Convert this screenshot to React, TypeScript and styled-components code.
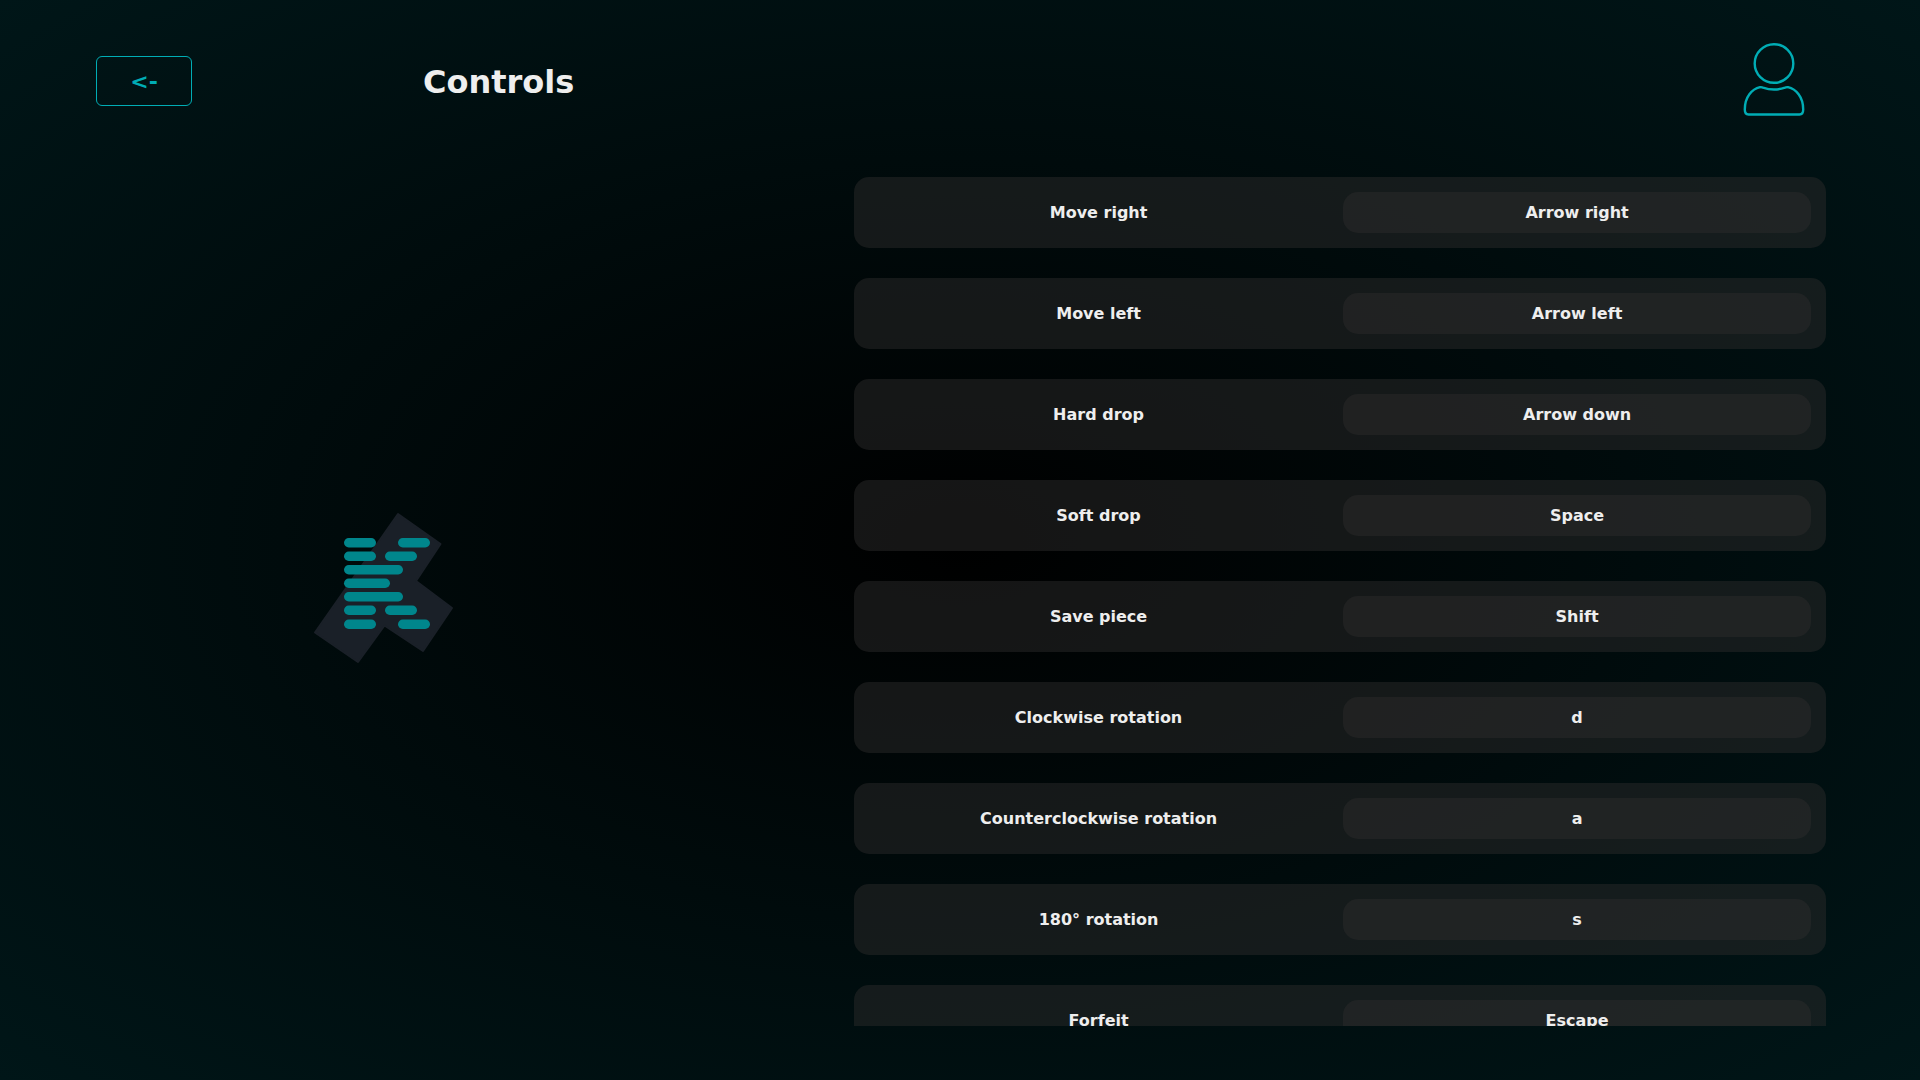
import React from "react";
import styled, { createGlobalStyle } from "styled-components";

const GlobalStyle = createGlobalStyle`
  *, *::before, *::after { box-sizing: border-box; }
  body {
    margin: 0;
    color: #eeeeee;
    background: #000;
    font-family: "DejaVu Sans", Verdana, sans-serif;
    font-size: 16px;
    font-weight: 700;
    line-height: 19px;
  }
`;

const Page = styled.div`
  display: flex;
  flex-direction: column;
  height: 100vh;
  padding: 0 94px 5vh 96px;
  overflow: hidden;
  background: radial-gradient(ellipse at center, #000000 0%, #001618 100%);
`;

const Header = styled.header`
  display: flex;
  flex: none;
  align-items: center;
  height: 15vh;
`;

const BackButton = styled.button`
  width: 96px;
  height: 50px;
  padding: 0;
  border: 1px solid #00adb5;
  border-radius: 6px;
  background: transparent;
  color: #00adb5;
  font: inherit;
  font-size: 22px;
  cursor: pointer;
`;

const Title = styled.h1`
  flex: 1;
  margin: 0;
  padding: 2px 0 0 231px;
  font-size: 32px;
  line-height: 40px;
`;

const ProfileButton = styled.button`
  display: flex;
  margin-right: 21px;
  padding: 0;
  border: 0;
  background: none;
  color: #00adb5;
  cursor: pointer;
`;

const Main = styled.main`
  display: grid;
  flex: 1;
  grid-template-columns: 574fr 184fr 972fr;
  min-height: 0;
`;

const LogoPane = styled.div`
  display: grid;
  place-items: center;
  padding-bottom: 12px;
`;

const ControlList = styled.dl`
  display: flex;
  grid-column: 3;
  flex-direction: column;
  gap: 30px;
  min-height: 0;
  margin: 0;
  padding-top: 15px;
  overflow-y: auto;
  scrollbar-width: none;
`;

const ControlRow = styled.div`
  display: grid;
  flex: none;
  grid-template-columns: 23fr 22fr;
  align-items: center;
  padding: 15px 15px 15px 0;
  border-radius: 15px;
  background: rgba(42, 42, 42, 0.5);
  text-align: center;
`;

const Action = styled.dt`
  margin: 0;
`;

const KeyName = styled.dd`
  margin: 0;
  padding: 11px;
  border-radius: 15px;
  background: rgba(54, 51, 51, 0.33);
`;

const controls = [
  ["Move right", "Arrow right"],
  ["Move left", "Arrow left"],
  ["Hard drop", "Arrow down"],
  ["Soft drop", "Space"],
  ["Save piece", "Shift"],
  ["Clockwise rotation", "d"],
  ["Counterclockwise rotation", "a"],
  ["180° rotation", "s"],
  ["Forfeit", "Escape"],
];

// Each bar of the K: x, y, width
const bars = [
  [44, 38, 32], [98, 38, 32],
  [44, 51.5, 32], [85, 51.5, 32],
  [44, 65, 59],
  [44, 78.5, 46],
  [44, 92, 59],
  [44, 105.5, 32], [85, 105.5, 32],
  [44, 119.5, 32], [98, 119.5, 32],
];

function Logo() {
  return (
    <svg width="142" height="152" viewBox="12 12 142 152" role="img" aria-label="Logo">
      <path
        d="M98 14L140.500 44L116 81L152 108L123 151L84.500 125.500L58 162L15 132.500Z"
        fill="#1a2028"
        stroke="#1a2028"
        strokeLinejoin="round"
        strokeWidth="2"
      />
      {bars.map(([x, y, width]) => (
        <rect key={`${x}-${y}`} x={x} y={y} width={width} height="9.500" rx="4.750" fill="#00868c" />
      ))}
    </svg>
  );
}

function UserIcon() {
  return (
    <svg width="62" height="76" viewBox="0 0 62 76" fill="none" stroke="currentColor" strokeWidth="2.400" aria-hidden="true">
      <circle cx="31" cy="20.500" r="19.300" />
      <path d="M5.500 71.500Q1.800 71.500 1.800 66.500C1.800 54 9 46 17 44.200Q18.500 43.900 20 44.600Q31 48.500 42 44.600Q43.500 43.900 45 44.200C53 46 60.200 54 60.200 66.500Q60.200 71.500 56.500 71.500Z" />
    </svg>
  );
}

export default function App() {
  return (
    <>
      <GlobalStyle />
      <Page>
        <Header>
          <BackButton type="button">&lt;-</BackButton>
          <Title>Controls</Title>
          <ProfileButton type="button" aria-label="Profile">
            <UserIcon />
          </ProfileButton>
        </Header>
        <Main>
          <LogoPane>
            <Logo />
          </LogoPane>
          <ControlList>
            {controls.map(([action, keyName]) => (
              <ControlRow key={action}>
                <Action>{action}</Action>
                <KeyName>{keyName}</KeyName>
              </ControlRow>
            ))}
          </ControlList>
        </Main>
      </Page>
    </>
  );
}
